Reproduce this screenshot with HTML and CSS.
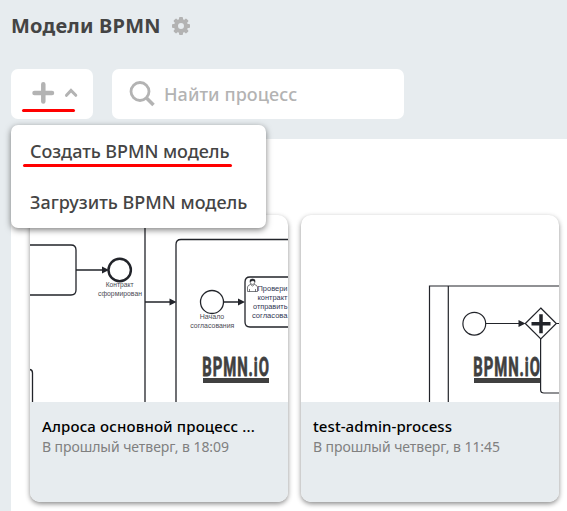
FILE: index.html
```html
<!DOCTYPE html>
<html lang="ru">
<head>
<meta charset="utf-8">
<title>Модели BPMN</title>
<link rel="stylesheet" href="styles.css">
</head>
<body>
<header class="top">
  <div class="heading">
    <h1>Модели BPMN</h1>
    <svg class="gear" width="18" height="18" viewBox="-9 -9 18 18">
      <g fill="#b3b3b3"><circle r="5" fill="none" stroke="#b3b3b3" stroke-width="4"/>
      <g id="teeth"><rect x="-2" y="-9" width="4" height="4" rx="1"/><rect x="-2" y="5" width="4" height="4" rx="1"/><rect x="-9" y="-2" width="4" height="4" rx="1"/><rect x="5" y="-2" width="4" height="4" rx="1"/></g>
      <use href="#teeth" transform="rotate(45)"/></g>
    </svg>
  </div>
  <div class="toolbar">
    <div class="create">
      <button class="add" aria-label="Создать">
        <svg width="82" height="50" viewBox="0 0 82 50" fill="none" stroke="#b3b3b3" stroke-linecap="round">
          <path d="M23.500 24H41M32.300 15.200V32.500" stroke-width="4.500"/>
          <path d="M55.500 26.300L60 21.500L64.800 26.300" stroke-width="3"/>
          <path d="M12.500 41.500H62.500" stroke="#f00" stroke-width="3"/>
        </svg>
      </button>
      <div class="menu">
        <div class="item"><span class="marked">Создать BPMN модель</span></div>
        <div class="item"><span class="upload">Загрузить BPMN модель</span></div>
      </div>
    </div>
    <label class="search">
      <svg width="26" height="26" viewBox="0 0 26 26" fill="none" stroke="#b3b3b3" stroke-width="2.800"><circle cx="11" cy="10.500" r="9"/><path d="M17 16.500L24.500 24" stroke-width="3.500"/></svg>
      <span>Найти процесс</span>
    </label>
  </div>
</header>
<main class="cards">
  <article class="card">
    <svg class="preview" viewBox="30 215 258 187" fill="none" stroke="#22242a" stroke-width="1.300">
      <path d="M30 245H71Q76 245 76 250V290Q76 295 71 295H30"/>
      <path d="M76 270H102M145 215V402M145 302H170M288 239.500H181Q176 239.500 176 244.500V402M224 302H239M30 369.500Q32.500 370 32.500 373V402"/>
      <path d="M102 266.500L109 270L102 273.500ZM169.500 298.500L176.500 302L169.500 305.500ZM238 298.500L245 302L238 305.500Z" fill="#22242a" stroke="none"/>
      <circle cx="119.700" cy="270" r="11.200" stroke-width="2.400"/>
      <circle cx="212" cy="302" r="11.500"/>
      <path d="M288 277H250Q245 277 245 282V322Q245 327 250 327H288"/>
      <g stroke-width=".6"><path d="M247.500 291.500V287Q248 285 250.500 284.500L252.500 286L254.500 284.500Q257 285 257.500 287V291.500ZM249.500 289V291.500M255.500 289V291.500"/><circle cx="252.500" cy="282" r="2.400"/><path d="M250 281.500Q249.500 279 252.500 279T255 281.500L253 280.500Z" fill="#22242a"/></g>
      <g class="caption">
        <text x="119.700" y="287.300" textLength="28" lengthAdjust="spacingAndGlyphs">Контракт</text>
        <text x="120" y="296.300" textLength="44" lengthAdjust="spacingAndGlyphs">сформирован</text>
        <text x="212" y="319.300" textLength="24.500" lengthAdjust="spacingAndGlyphs">Начало</text>
        <text x="212.300" y="328.300" textLength="44" lengthAdjust="spacingAndGlyphs">согласования</text>
      </g>
      <g class="task">
        <text x="257.500" y="291" textLength="30" lengthAdjust="spacingAndGlyphs">Провери</text>
        <text x="257.500" y="300" textLength="30" lengthAdjust="spacingAndGlyphs">контракт</text>
        <text x="253" y="309" textLength="34.500" lengthAdjust="spacingAndGlyphs">отправить</text>
        <text x="252" y="318" textLength="35.500" lengthAdjust="spacingAndGlyphs">согласова</text>
      </g>
      <text class="wordmark" transform="translate(202.300 376) scale(.57 1)" textLength="117">BPMN.iO</text>
      <path d="M203 380.500H269" stroke="#404040" stroke-width="5"/>
    </svg>
    <div class="info"><h2 class="name-long">Алроса основной процесс ...</h2><p>В прошлый четверг, в 18:09</p></div>
  </article>
  <article class="card">
    <svg class="preview" viewBox="301 215 258 187" fill="none" stroke="#22242a" stroke-width="1.200">
      <path d="M559 286H429.500V402M448.300 286V402M486 323.500H520M556 323.500H559"/>
      <circle cx="474.300" cy="323.700" r="11.400"/>
      <path d="M518.500 320L525.500 323.500L518.500 327Z" fill="#22242a" stroke="none"/>
      <path d="M559 339H540.600V390Q540.600 393 544 393H559Z" fill="#fff" stroke="none"/>
      <text class="wordmark" transform="translate(473.300 376) scale(.57 1)" textLength="117">BPMN.iO</text>
      <path d="M474 380.500H540" stroke="#404040" stroke-width="5"/>
      <path d="M540.600 339V390Q540.600 393 544 393H559"/>
      <path d="M540.800 308L556.300 323.500L540.800 339L525.300 323.500Z" fill="#fff"/>
      <path d="M531.500 323.700H550.500M541 314.200V333.200" stroke-width="3.500"/>
    </svg>
    <div class="info"><h2 class="name-short">test-admin-process</h2><p>В прошлый четверг, в 11:45</p></div>
  </article>
</main>
</body>
</html>
```
FILE: styles.css
```css
* { box-sizing: border-box; }
body {
  margin: 0;
  height: 511px;
  overflow: hidden;
  background: #e7ecef;
  font-family: "Noto Sans", "Open Sans", sans-serif;
  color: #444;
}
h1, h2, p { margin: 0; white-space: nowrap; }
.top { height: 139px; padding: 12px 0 0 11px; }
.heading { display: flex; align-items: center; height: 28px; gap: 11px; }
h1 { width: 150px; font-size: 20px; line-height: 28px; font-weight: 700; letter-spacing: .2px; }
.toolbar { display: flex; gap: 19px; margin-top: 29px; }
.create { position: relative; }
.add { display: block; width: 82px; height: 50px; padding: 0; border: 0; border-radius: 7px; background: #fff; }
.add svg { display: block; }
.menu {
  position: absolute;
  z-index: 2;
  top: 56px;
  left: 0;
  width: 255px;
  height: 103px;
  padding: 1px 0;
  border-radius: 7px;
  background: #fff;
  box-shadow: 0 2px 6px rgba(0, 0, 0, .5);
}
.item { height: 51px; padding: 12px 19px; font-size: 18px; line-height: 27px; font-weight: 500; white-space: nowrap; }
.marked { position: relative; letter-spacing: -.06px; }
.marked::after {
  content: "";
  position: absolute;
  left: -7px;
  right: -3px;
  bottom: -4px;
  height: 3px;
  border-radius: 2px;
  background: #f00;
}
.search {
  display: flex;
  align-items: center;
  gap: 9px;
  width: 292px;
  height: 50px;
  padding-left: 17px;
  border-radius: 7px;
  background: #fff;
  color: #b3b3b3;
  font-size: 18px;
  font-weight: 500;
  letter-spacing: .08px;
}
.cards { display: flex; gap: 13px; height: 372px; margin-left: 11px; padding: 76px 0 0 19px; background: #fff; }
.card { flex: none; width: 258px; height: 287px; overflow: hidden; border-radius: 10px; background: #fff; box-shadow: 0 2px 5px rgba(0, 0, 0, .45); }
.preview { display: block; width: 258px; height: 187px; }
.info { height: 100px; padding: 14px 12px; background: #e7ecef; }
h2 { color: #000; font-size: 15px; line-height: 21px; font-weight: 500; }
.name-long { letter-spacing: .15px; }
.name-short { letter-spacing: .08px; }
p { color: #808080; font-size: 14px; line-height: 20px; letter-spacing: -.06px; }
.caption, .task { stroke: none; font: 7px "Liberation Sans", sans-serif; text-anchor: middle; fill: #4a4a52; }
.task { text-anchor: start; font-size: 7.800px; fill: #303653; }
.wordmark { stroke: #404040; stroke-width: .8px; fill: #404040; font: 700 26px Roboto, sans-serif; }
```
